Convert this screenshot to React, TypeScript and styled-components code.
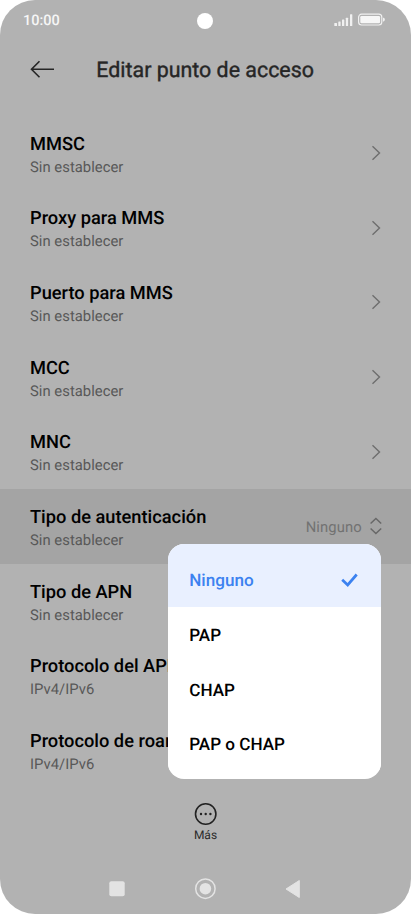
import React from 'react';
import styled, { createGlobalStyle } from 'styled-components';

const GlobalStyle = createGlobalStyle`
  * { box-sizing: border-box; }
  body { margin: 0; background: #fff; }
`;

const Screen = styled.div`
  width: 411px;
  height: 914px;
  display: flex;
  flex-direction: column;
  overflow: hidden;
  border-radius: 35px;
  background: #b2b2b2;
  color: #000;
  font-family: Roboto, sans-serif;
  text-rendering: geometricPrecision;
`;

const StatusBar = styled.header`
  height: 40px;
  flex: none;
  display: grid;
  grid-template-columns: 1fr 16px 1fr;
  align-items: center;
  padding: 0 25px 0 23px;
`;

const Clock = styled.time`
  margin-top: 2px;
  color: #f6f6f6;
  font-size: 14.5px;
  font-weight: 500;
  line-height: 20px;
`;

const Camera = styled.span`
  width: 16px;
  height: 16px;
  margin-top: 1px;
  border-radius: 50%;
  background: #fff;
`;

const StatusIcons = styled.svg`
  justify-self: end;
  display: block;
`;

const TitleBar = styled.div`
  height: 75.75px;
  flex: none;
  display: flex;
  align-items: flex-start;
  padding: 16px 0 0 30px;
`;

const BackIcon = styled.svg`
  margin: 3px 41.3px 0 0;
`;

const Title = styled.h1`
  margin: 1px 0 0;
  color: #262626;
  font-size: 21.4px;
  font-weight: 400;
  line-height: 28px;
  -webkit-text-stroke: 0.4px #262626;
  white-space: nowrap;
`;

const List = styled.main`
  flex: none;
`;

const Row = styled.div<{ $active?: boolean }>`
  position: relative;
  height: 74.65px;
  display: flex;
  align-items: center;
  justify-content: space-between;
  padding: 0 29px 0 30px;
  background: ${(p) => (p.$active ? '#a4a4a4' : 'transparent')};
`;

const RowText = styled.div`
  padding-top: 4px;
  white-space: nowrap;
`;

const RowTitle = styled.div`
  font-size: 18.25px;
  font-weight: 500;
  line-height: 24px;
`;

const RowValue = styled.div`
  color: #585858;
  font-size: 14.8px;
  line-height: 20.5px;
  letter-spacing: 0.03px;
`;

const Chevron = styled.svg`
  flex: none;
`;

const Selection = styled.div`
  display: flex;
  align-items: center;
  gap: 7.3px;
  color: #727272;
  font-size: 14.8px;
  line-height: 20px;
  letter-spacing: 0.08px;
`;

const SelectionLabel = styled.span`
  padding-top: 2px;
`;

const Menu = styled.div`
  position: absolute;
  z-index: 1;
  top: 55.5px;
  right: 29.7px;
  width: 213.6px;
  height: 234.5px;
  padding-bottom: 8px;
  overflow: hidden;
  border-radius: 16px;
  background: #fff;
`;

const MenuItem = styled.div<{ $selected?: boolean }>`
  height: ${(p) => (p.$selected ? '63px' : '54.5px')};
  display: flex;
  align-items: center;
  justify-content: space-between;
  padding: ${(p) => (p.$selected ? '11px' : '3px')} 23.3px 0 21.5px;
  background: ${(p) => (p.$selected ? '#e9f0ff' : '#fff')};
  color: ${(p) => (p.$selected ? '#3c82f0' : '#000')};
  font-size: 17.1px;
  font-weight: 500;
  line-height: 22px;
`;

const CheckIcon = styled.svg`
  margin-bottom: 2px;
`;

const MoreAction = styled.div`
  flex: none;
  margin-top: 14.5px;
  height: 56px;
  display: flex;
  flex-direction: column;
  align-items: center;
  color: #2a2a2a;
  font-size: 12px;
  line-height: 18px;
`;

const NavBar = styled.nav`
  flex: none;
  height: 61px;
  display: flex;
  align-items: center;
  justify-content: space-between;
  padding: 0 110px 0 108px;
`;

const rows = [
  ['MMSC', 'Sin establecer'],
  ['Proxy para MMS', 'Sin establecer'],
  ['Puerto para MMS', 'Sin establecer'],
  ['MCC', 'Sin establecer'],
  ['MNC', 'Sin establecer'],
  ['Tipo de autenticación', 'Sin establecer'],
  ['Tipo de APN', 'Sin establecer'],
  ['Protocolo del APN', 'IPv4/IPv6'],
  ['Protocolo de roaming', 'IPv4/IPv6'],
];

const options = ['Ninguno', 'PAP', 'CHAP', 'PAP o CHAP'];

function AuthenticationMenu() {
  return (
    <Menu role="listbox">
      {options.map((option, i) => (
        <MenuItem key={option} $selected={i === 0}>
          {option}
          {i === 0 && (
            <CheckIcon width="17" height="14" viewBox="0 0 17 14" fill="none" stroke="#3c82f0" strokeWidth="2.7">
              <path d="M1.2 6.7 6.7 12 15.7 1.5" />
            </CheckIcon>
          )}
        </MenuItem>
      ))}
    </Menu>
  );
}

export default function App() {
  return (
    <>
      <GlobalStyle />
      <Screen>
        <StatusBar>
          <Clock>10:00</Clock>
          <Camera />
          <StatusIcons width="52" height="14" viewBox="0 0 52 14">
            <g fill="#f0f0f0">
              <rect x="0.3" y="10" width="2.7" height="3" rx=".5" />
              <rect x="4.3" y="8.4" width="2.3" height="4.6" rx=".5" />
              <rect x="8" y="6.4" width="2.3" height="6.6" rx=".5" />
              <rect x="11.8" y="4.7" width="2.3" height="8.3" rx=".5" />
              <rect x="16" y="1.3" width="2.3" height="11.7" rx=".5" />
            </g>
            <rect x="24.6" y="1.2" width="23.2" height="10.8" rx="3" fill="none" stroke="#f0f0f0" strokeWidth="1.2" />
            <rect x="26.3" y="2.9" width="19.8" height="7.4" rx="1.3" fill="#f6f6f6" />
            <path d="M49 4.8h.6q1.2 0 1.2 1.8t-1.2 1.8H49z" fill="#f0f0f0" />
          </StatusIcons>
        </StatusBar>
        <TitleBar>
          <BackIcon width="25" height="20" viewBox="0 0 25 20" fill="none" stroke="#262626" strokeWidth="1.6">
            <path d="M24 10.3H1.8M9.5 2.3 1.5 10.3l8 8" />
          </BackIcon>
          <Title>Editar punto de acceso</Title>
        </TitleBar>
        <List>
          {rows.map(([title, value], i) => (
            <Row key={title} $active={i === 5}>
              <RowText>
                <RowTitle>{title}</RowTitle>
                <RowValue>{value}</RowValue>
              </RowText>
              {i === 5 ? (
                <Selection>
                  <SelectionLabel>Ninguno</SelectionLabel>
                  <svg width="13" height="18" viewBox="0 0 13 18" fill="none" stroke="#686868" strokeWidth="1.5">
                    <path d="M1.6 6.5 6.9 1.5l5.3 5M1.6 11.5l5.3 5 5.3-5" />
                  </svg>
                </Selection>
              ) : (
                <Chevron width="11" height="16" viewBox="0 0 11 16" fill="none" stroke="#6e6e6e" strokeWidth="1.4">
                  <path d="m1.5 1.3 7 6.7-7 6.7" />
                </Chevron>
              )}
              {i === 5 && <AuthenticationMenu />}
            </Row>
          ))}
        </List>
        <MoreAction>
          <svg width="24" height="24" viewBox="0 0 24 24" fill="#222">
            <circle cx="11.7" cy="12" r="10.2" fill="none" stroke="#222" strokeWidth="1.6" />
            <circle cx="7" cy="12" r="1.2" />
            <circle cx="11.7" cy="12" r="1.2" />
            <circle cx="16.4" cy="12" r="1.2" />
          </svg>
          Más
        </MoreAction>
        <NavBar>
          <svg width="18" height="18" viewBox="0 0 18 18">
            <rect x="1.3" y="1.3" width="15.4" height="15" rx="2" fill="#e3e3e3" />
          </svg>
          <svg width="24" height="24" viewBox="0 0 24 24">
            <circle cx="11.4" cy="11.7" r="9.7" fill="none" stroke="#e3e3e3" strokeWidth="1.5" />
            <circle cx="11.4" cy="11.7" r="5.8" fill="#e3e3e3" />
          </svg>
          <svg width="16" height="20" viewBox="0 0 16 20">
            <path d="M14.3 1.5v17L1 10z" fill="#e3e3e3" stroke="#e3e3e3" strokeLinejoin="round" />
          </svg>
        </NavBar>
      </Screen>
    </>
  );
}
